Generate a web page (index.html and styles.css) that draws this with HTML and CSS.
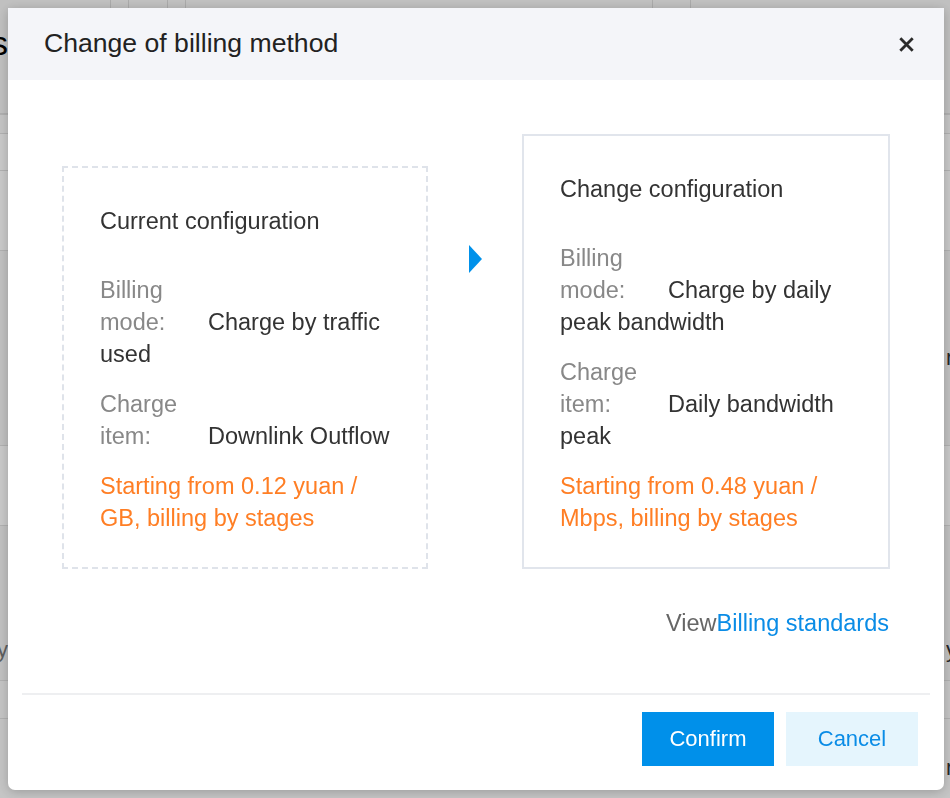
FILE: index.html
```html
<!DOCTYPE html>
<html lang="en">
<head>
<meta charset="utf-8">
<title>Change of billing method</title>
<link rel="stylesheet" href="styles.css">
</head>
<body>
<div class="page">
  <header class="pg-top">
    <div class="pg-brand"><span>Logs</span></div>
    <div class="pg-cell w102"></div>
    <div class="pg-cell bl w18"></div>
    <div class="pg-cell bl w39"></div>
    <div class="pg-cell bl w18"></div>
    <div class="pg-cell bl w467"></div>
    <div class="pg-cell bl w38"></div>
    <div class="pg-cell bl grow"></div>
  </header>
  <div class="pg-row h19 tint-a"></div>
  <div class="pg-row h37 tint-b"></div>
  <div class="pg-row h80 tint-b"></div>
  <div class="pg-row h138 tint-c"><span class="pg-edge-l"></span><span class="pg-edge-r">n</span></div>
  <div class="pg-row h57 tint-c plain"></div>
  <div class="pg-row h80 tint-b"></div>
  <div class="pg-row h155 tint-c"><span class="pg-edge-l">Today</span><span class="pg-edge-r">y</span></div>
  <div class="pg-row h38 tint-a"></div>
  <div class="pg-row h80 tint-a"><span class="pg-edge-l"></span><span class="pg-edge-r">n</span></div>
</div>

<div class="mask"></div>

<div class="dialog" role="dialog" aria-labelledby="dlg-title">
  <div class="dlg-head">
    <h2 class="dlg-title" id="dlg-title">Change of billing method</h2>
    <button class="dlg-close" aria-label="Close">
      <svg viewBox="0 0 15 15" width="15" height="15"><path d="M1.3 1.3 L13.7 13.7 M13.7 1.3 L1.3 13.7" stroke="#2b2b2b" stroke-width="2.8" stroke-linecap="butt" fill="none"/></svg>
    </button>
  </div>

  <div class="dlg-body">
    <div class="compare">
      <div class="card card-current">
        <div class="card-title">Current configuration</div>
        <div class="item"><span class="lbl">Billing mode:</span><span class="val">Charge by traffic used</span></div>
        <div class="item"><span class="lbl">Charge item:</span><span class="val">Downlink Outflow</span></div>
        <div class="price">Starting from 0.12 yuan / GB, billing by stages</div>
      </div>
      <div class="arrow"></div>
      <div class="card card-next">
        <div class="card-title">Change configuration</div>
        <div class="item"><span class="lbl">Billing mode:</span><span class="val">Charge by daily peak bandwidth</span></div>
        <div class="item"><span class="lbl">Charge item:</span><span class="val">Daily bandwidth peak</span></div>
        <div class="price">Starting from 0.48 yuan / Mbps, billing by stages</div>
      </div>
    </div>
    <div class="view">View<a class="link" href="#">Billing standards</a></div>
  </div>

  <div class="dlg-foot">
    <button class="btn btn-primary">Confirm</button>
    <button class="btn btn-weak">Cancel</button>
  </div>
</div>
</body>
</html>
```

FILE: styles.css
```css
html, body {
  margin: 0;
  padding: 0;
}

body {
  width: 950px;
  height: 798px;
  overflow: hidden;
  font-family: "Liberation Sans", Arial, sans-serif;
  background: #f6f6f6;
}

/* ---------- background page (under the mask) ---------- */
.page {
  display: flex;
  flex-direction: column;
}

.pg-top {
  display: flex;
  height: 114px;
  background: #f1f1f1;
  border-bottom: 1px solid #dcdcdc;
  box-sizing: border-box;
}

.pg-brand {
  width: 8px;
  overflow: hidden;
  direction: rtl;
  white-space: nowrap;
  font-size: 34px;
  line-height: 86px;
  color: #000;
}

.pg-cell { height: 100%; box-sizing: border-box; }
.pg-cell.bl { border-left: 1px solid #d6d6d6; }
.w102 { width: 102px; }
.w18 { width: 18px; }
.w39 { width: 39px; }
.w467 { width: 467px; }
.w38 { width: 38px; }
.grow { flex: 1; }

.pg-row {
  display: flex;
  justify-content: space-between;
  align-items: flex-end;
  box-sizing: border-box;
  border-top: 1px solid #dedede;
}
.pg-row.plain { border-top: 0; }
.h19 { height: 19px; }
.h37 { height: 37px; }
.h80 { height: 80px; }
.h138 { height: 138px; }
.h57 { height: 57px; }
.h155 { height: 155px; }
.h38 { height: 38px; }
.tint-a { background: #f7f7f7; }
.tint-b { background: #fdfdfd; }
.tint-c { background: #f2f2f2; }

.pg-edge-l {
  width: 8px;
  overflow: hidden;
  direction: rtl;
  white-space: nowrap;
  font-size: 22px;
  line-height: 60px;
  color: #777;
}
.pg-edge-r {
  width: 4px;
  overflow: hidden;
  white-space: nowrap;
  font-size: 22px;
  line-height: 60px;
  color: #333;
}

/* ---------- mask ---------- */
.mask {
  position: fixed;
  inset: 0;
  background: rgba(0, 0, 0, 0.2);
}

/* ---------- dialog ---------- */
.dialog {
  position: fixed;
  left: 8px;
  top: 8px;
  width: 936px;
  background: #fff;
  border-radius: 0 0 7px 7px;
  box-shadow: 0 2px 12px rgba(0, 0, 0, 0.22);
  display: flex;
  flex-direction: column;
  color: #333;
}

.dlg-head {
  height: 72px;
  background: #f4f5f9;
  display: flex;
  align-items: center;
  justify-content: space-between;
  padding: 0 30px 0 36px;
}

.dlg-title {
  margin: 0 0 2px;
  font-size: 26.6px;
  font-weight: normal;
  color: #222;
}

.dlg-close {
  width: 15px;
  height: 15px;
  padding: 0;
  border: 0;
  background: none;
  display: flex;
}

.dlg-body {
  padding: 54px 54px 54px;
}

.compare {
  display: flex;
  align-items: flex-end;
  justify-content: space-between;
}

.card {
  box-sizing: border-box;
  padding: 37px 36px 33px;
  font-size: 23.5px;
  line-height: 32px;
  color: #333;
}

.card-current {
  width: 366px;
  border: 2px dashed #dfe3ea;
}

.card-next {
  width: 368px;
  border: 2px solid #e1e5ec;
}

.card-title {
  margin-bottom: 37px;
  color: #333;
}

.item {
  margin-bottom: 18px;
}

.lbl {
  display: inline-block;
  width: 108px;
  color: #888;
}

.val {
  color: #333;
}

.price {
  color: #ff7e24;
}

.arrow {
  align-self: flex-start;
  margin-top: 111px;
  width: 0;
  height: 0;
  border-left: 13px solid #0091ea;
  border-top: 14px solid transparent;
  border-bottom: 14px solid transparent;
}

.view {
  margin-top: 38px;
  margin-right: 1px;
  text-align: right;
  font-size: 23.5px;
  line-height: 32px;
  color: #666;
}

.link {
  color: #0a8ce6;
  text-decoration: none;
}

.dlg-foot {
  margin: 0 14px;
  border-top: 2px solid #eeeff1;
  padding: 17px 12px 24px 0;
  display: flex;
  justify-content: flex-end;
  gap: 12px;
}

.btn {
  width: 132px;
  height: 54px;
  border: 0;
  padding: 0;
  font-family: "Liberation Sans", Arial, sans-serif;
  font-size: 22px;
}

.btn-primary {
  background: #0090ea;
  color: #fff;
}

.btn-weak {
  background: #e5f5fd;
  color: #0a8ce6;
}
```
